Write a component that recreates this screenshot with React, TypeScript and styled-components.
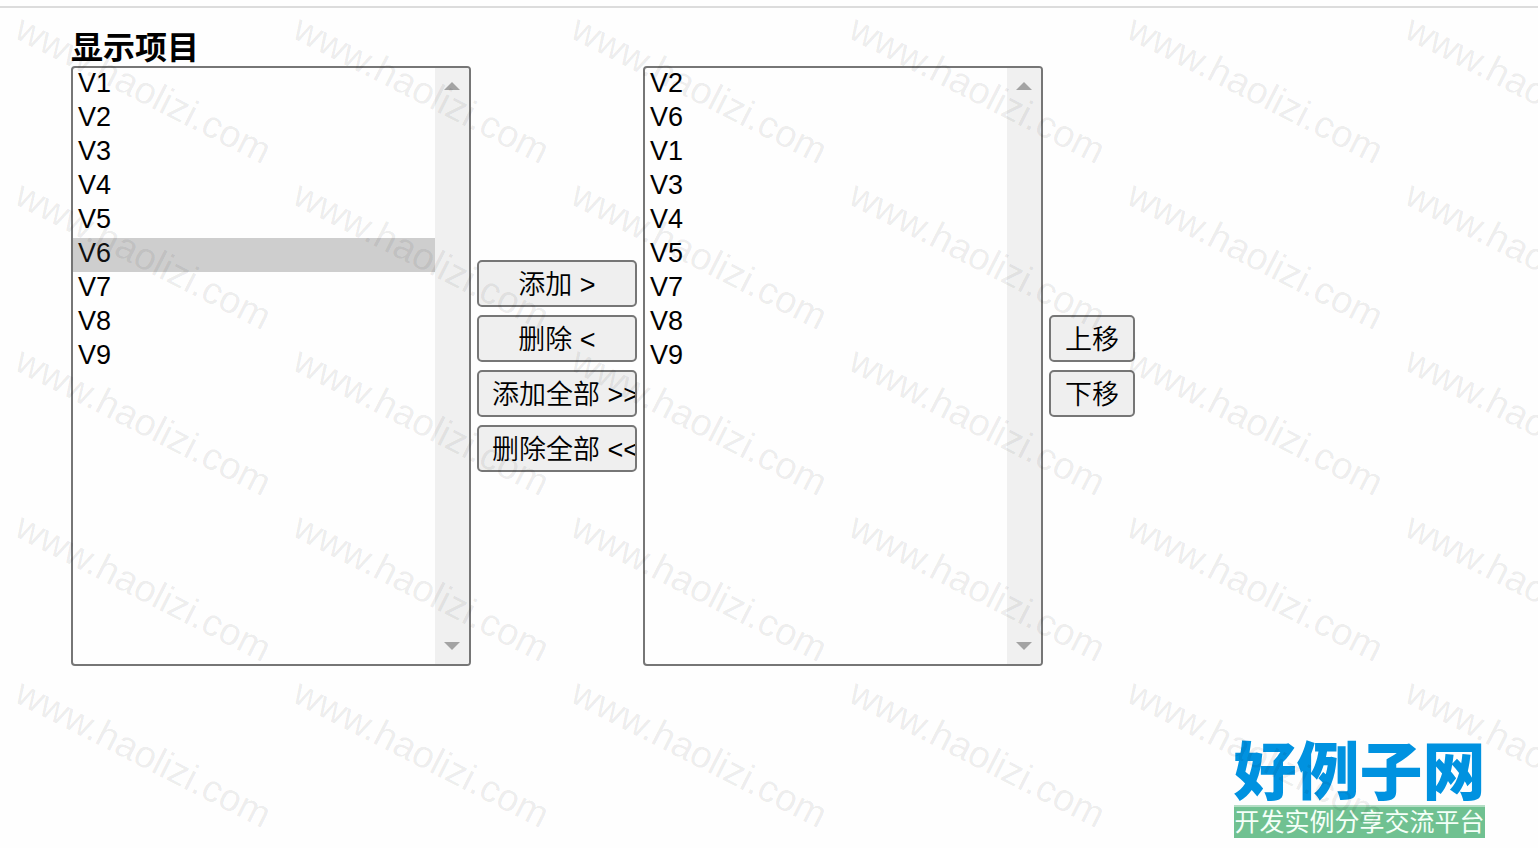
import React, { useState } from 'react';
import styled, { createGlobalStyle } from 'styled-components';

const GlobalStyle = createGlobalStyle`
  * { box-sizing: border-box; }
  body {
    margin: 0;
    background: #fefefe;
    color: #000;
    font-family: "Liberation Sans", "Noto Sans CJK SC", sans-serif;
  }
`;

const Page = styled.div`
  position: relative;
  min-height: 100vh;
  padding-top: 6px;
  overflow: hidden;
`;

const Rule = styled.hr`
  height: 2px;
  margin: 0;
  border: 0;
  background: #dcdcdc;
`;

const Main = styled.main`
  padding: 18px 71px;
`;

const Title = styled.h1`
  margin: 0;
  height: 40px;
  font-size: 32px;
  line-height: 44px;
  font-weight: 700;
`;

const Picker = styled.div`
  display: flex;
  align-items: center;
  gap: 6px;
`;

const ListFrame = styled.div`
  display: flex;
  flex: 0 1 400px;
  height: 600px;
  border: 2px solid #767676;
  border-radius: 4px;
  background: #fefefe;
  overflow: hidden;
`;

const ListBox = styled.select`
  flex: 1;
  min-width: 0;
  height: 100%;
  padding: 0;
  border: 0;
  outline: 0;
  background: transparent;
  color: #000;
  font-family: inherit;
  font-size: 27px;
  overflow: hidden;
  scrollbar-width: none;

  option {
    height: 34px;
    min-height: 34px;
    padding: 0 5px;
  }
`;

const ScrollTrack = styled.div`
  display: flex;
  flex-direction: column;
  justify-content: space-between;
  align-items: center;
  width: 34px;
  padding: 14px 0;
  background: #f0f0f0;
`;

const Arrow = styled.span<{ $down?: boolean }>`
  width: 16px;
  height: 8px;
  background: #a3a3a3;
  clip-path: ${(p) =>
    p.$down ? 'polygon(0 0, 100% 0, 50% 100%)' : 'polygon(50% 0, 100% 100%, 0 100%)'};
`;

const ButtonColumn = styled.div<{ $width: number }>`
  display: flex;
  flex-direction: column;
  gap: 8px;
  width: ${(p) => p.$width}px;
`;

const Button = styled.button`
  height: 47px;
  padding: 4px 13px 0;
  border: 2px solid #767676;
  border-radius: 5px;
  background: #efefef;
  color: #000;
  font-family: inherit;
  font-size: 27px;
  font-weight: 350;
  line-height: 39px;
  white-space: nowrap;
  overflow: hidden;
`;

const Logo = styled.div`
  position: absolute;
  right: 53px;
  bottom: 10px;
  width: 251px;
  white-space: nowrap;
`;

const LogoName = styled.div`
  display: flex;
  justify-content: center;
  height: 66px;
  color: #0092e0;
  font-family: "Noto Sans CJK SC", sans-serif;
  font-size: 63px;
  font-weight: 900;
  line-height: 56px;
`;

const LogoTagline = styled.div`
  display: flex;
  justify-content: center;
  height: 33px;
  border-top: 2px solid #b4dec5;
  background: #70c191;
  color: #f4fff8;
  font-family: "Noto Sans CJK SC", sans-serif;
  font-size: 25px;
  line-height: 26px;
`;

const Watermark = styled.div`
  position: absolute;
  inset: 0;
  display: grid;
  grid-template-columns: repeat(auto-fill, 278px);
  grid-auto-rows: 166px;
  width: calc(100% + 278px);
  padding: 4px 0 0 12px;
  overflow: hidden;
  pointer-events: none;
  user-select: none;
`;

const Mark = styled.span`
  color: rgba(0, 0, 0, 0.08);
  font-size: 38px;
  line-height: 40px;
  white-space: nowrap;
  transform: rotate(27deg);
  transform-origin: 0 34px;
`;

const MARK_COUNT = 36;

type ItemListProps = { label: string; items: string[]; initial?: string[] };

function ItemList({ label, items, initial = [] }: ItemListProps) {
  const [selected, setSelected] = useState<string[]>(initial);
  return (
    <ListFrame>
      <ListBox
        multiple
        aria-label={label}
        value={selected}
        onChange={(e) => setSelected(Array.from(e.target.selectedOptions, (o) => o.value))}
      >
        {items.map((item) => (
          <option key={item} value={item}>
            {item}
          </option>
        ))}
      </ListBox>
      <ScrollTrack aria-hidden="true">
        <Arrow />
        <Arrow $down />
      </ScrollTrack>
    </ListFrame>
  );
}

export default function App() {
  return (
    <Page>
      <GlobalStyle />
      <Rule />
      <Main>
        <Title>显示项目</Title>
        <Picker>
          <ItemList
            label="全部项目"
            items={['V1', 'V2', 'V3', 'V4', 'V5', 'V6', 'V7', 'V8', 'V9']}
            initial={['V6']}
          />
          <ButtonColumn $width={160}>
            <Button type="button">添加 &gt;</Button>
            <Button type="button">删除 &lt;</Button>
            <Button type="button">添加全部 &gt;&gt;</Button>
            <Button type="button">删除全部 &lt;&lt;</Button>
          </ButtonColumn>
          <ItemList
            label="显示项目"
            items={['V2', 'V6', 'V1', 'V3', 'V4', 'V5', 'V7', 'V8', 'V9']}
          />
          <ButtonColumn $width={86}>
            <Button type="button">上移</Button>
            <Button type="button">下移</Button>
          </ButtonColumn>
        </Picker>
      </Main>
      <Logo>
        <LogoName>好例子网</LogoName>
        <LogoTagline>开发实例分享交流平台</LogoTagline>
      </Logo>
      <Watermark aria-hidden="true">
        {Array.from({ length: MARK_COUNT }, (_, i) => (
          <Mark key={i}>www.haolizi.com</Mark>
        ))}
      </Watermark>
    </Page>
  );
}
